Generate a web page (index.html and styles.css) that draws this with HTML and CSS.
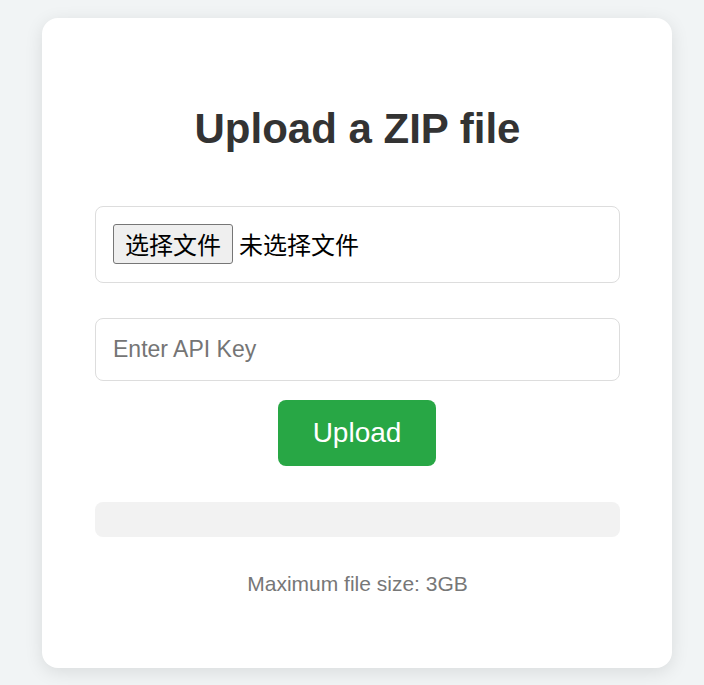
FILE: index.html
```html
<!DOCTYPE html>
<html lang="zh-CN">
<head>
  <meta charset="UTF-8">
  <title>Upload a ZIP file</title>
  <link rel="stylesheet" href="styles.css">
</head>
<body>

  <div class="card">
    <h1>Upload a ZIP file</h1>

    <div class="file-box">
      <button type="button" class="file-btn">选择文件</button>
      <span class="file-name">未选择文件</span>
    </div>

    <input type="text" class="api-key" placeholder="Enter API Key">

    <button type="button" class="upload-btn">Upload</button>

    <div class="progress"></div>

    <p class="note">Maximum file size: 3GB</p>
  </div>

</body>
</html>
```

FILE: styles.css
```css
body, html { margin:0; padding:0; width:100%; height:100%; font-family: "Liberation Sans", Arial, sans-serif; background: #f1f4f5; }
body { padding: 18px 0 0 42px; box-sizing: border-box; }
.card { width: 630px; height: 650px; box-sizing: border-box; padding: 40px 52px 40px 53px; background: #fff; border-radius: 16px; box-shadow: 0 4px 18px rgba(0,0,0,0.1); display: flex; flex-direction: column; align-items: center; }
h1 { font-size: 42px; margin: 47px 0 53px; color: #333; font-weight: bold; }
.file-box { width: 100%; box-sizing: border-box; border: 1px solid #ddd; border-radius: 8px; padding: 17px 17px 18px; display: flex; align-items: center; font-family: "Noto Sans CJK SC", sans-serif; font-size: 24px; color: #000; }
.file-btn { font-family: "Noto Sans CJK SC", sans-serif; font-size: 24px; height: 40px; padding: 0 11px; line-height: 36px; background: #efefef; border: 1px solid #767676; border-radius: 3px; color: #000; }
.file-name { margin-left: 6px; line-height: 40px; }
.api-key { width: 100%; box-sizing: border-box; margin-top: 35px; height: 63px; padding: 0 17px; border: 1px solid #ddd; border-radius: 8px; font-family: "Liberation Sans", Arial, sans-serif; font-size: 23px; outline: none; }
.api-key::placeholder { color: #757575; }
.upload-btn { margin: 19px 1px 0 0; width: 158px; height: 66px; border: none; border-radius: 8px; background: #28a745; color: #fff; font-family: "Liberation Sans", Arial, sans-serif; font-size: 28px; cursor: pointer; }
.upload-btn:hover { background: #218838; }
.progress { width: 100%; height: 35px; margin-top: 36px; background: #f2f2f2; border-radius: 8px; }
.note { margin: 35px 0 0; font-size: 21px; color: #777; }
```
